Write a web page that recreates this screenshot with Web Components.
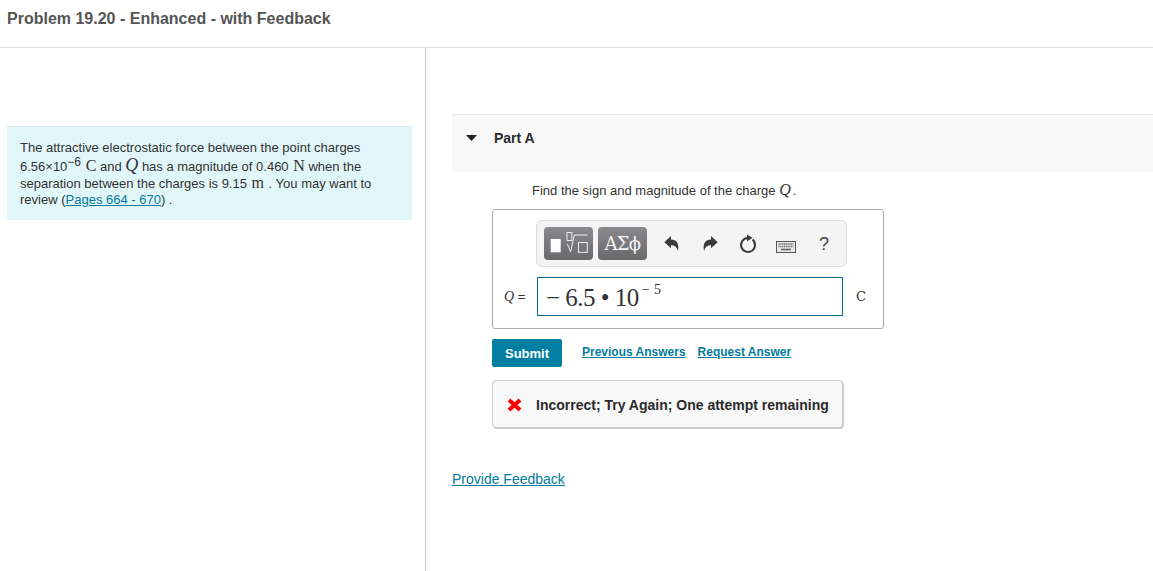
<!DOCTYPE html>
<html>
<head>
<meta charset="utf-8">
<title>Problem 19.20</title>
<style>
    html, body { margin: 0; padding: 0; height: 100%; background: #fff; overflow: hidden; }
    body { font-family: "Liberation Sans", Arial, sans-serif; color: #333; }
    problem-intro a { color: #007c9e; text-decoration: underline; }
    problem-intro sup { font-size: 12px; line-height: 0; vertical-align: 5px; }
    problem-intro .line2 { display: inline-block; margin: 3px 0 1px; }
</style>
</head>
<body>
<problem-page>
    <problem-intro slot="left">
        The attractive electrostatic force between the point charges<br>
        <span class="line2">6.56×10<sup>−6</sup> <m-i style="margin-left:1px">C</m-i> and <m-i italic>Q</m-i> has a magnitude of 0.460 <m-i style="margin-left:1px">N</m-i> when the</span><br>
        separation between the charges is 9.15 <m-i style="margin:0 1px">m</m-i> . You may want to<br>
        review (<a href="#">Pages 664 - 670</a>) .
    </problem-intro>
    <part-panel slot="right" title="Part A"></part-panel>
</problem-page>

<script>
// inline math letter, serif like the rendered equations
class MathLetter extends HTMLElement {
    constructor() {
        super()
        this.attachShadow({ mode: 'open' })
        this.shadowRoot.innerHTML = `
            <style>
                :host { display: inline; font-family: "Liberation Serif", serif; font-size: 16px; line-height: 0; }
                :host([italic]) { font-style: italic; font-size: 18px; }
            </style>
            <slot></slot>`
    }
}

class ProblemPage extends HTMLElement {
    constructor() {
        super()
        this.attachShadow({ mode: 'open' })
        this.shadowRoot.innerHTML = `
            <style>
                :host { display: flex; flex-direction: column; height: 571px; }
                header { height: 47px; border-bottom: 1px solid #ddd; padding-left: 7px; }
                h1 { margin: 0; padding-top: 10px; font: bold 16px/18px "Liberation Sans", Arial, sans-serif; color: #555; }
                .cols { display: flex; flex: 1; }
                .left { width: 405px; border-right: 1px solid #ccc; padding: 78px 13px 0 7px; }
                .right { flex: 1; padding: 66px 0 0 26px; min-width: 0; }
            </style>
            <header><h1>Problem 19.20 - Enhanced - with Feedback</h1></header>
            <div class="cols">
                <div class="left"><slot name="left"></slot></div>
                <div class="right"><slot name="right"></slot></div>
            </div>`
    }
}

class ProblemIntro extends HTMLElement {
    constructor() {
        super()
        this.attachShadow({ mode: 'open' })
        this.shadowRoot.innerHTML = `
            <style>
                :host {
                    display: block;
                    height: 93px;
                    background: #e1f6f9;
                    border-top: 1px solid #dfe7e8;
                }
                #text { padding: 13px 13px 0 13px; font-size: 13px; line-height: 16px; color: #333; }
            </style>
            <div id="text"><slot></slot></div>`
    }
}

class MathToolbar extends HTMLElement {
    constructor() {
        super()
        this.attachShadow({ mode: 'open' })
        this.shadowRoot.innerHTML = `
            <style>
                :host {
                    display: flex; align-items: center;
                    width: 311px; height: 47px; box-sizing: border-box;
                    background: #f4f4f4; border: 1px solid #ddd; border-radius: 6px;
                    padding: 0 0 0 7px;
                }
                .btn {
                    flex: none; width: 49px; height: 33px; border-radius: 4px;
                    background: linear-gradient(#8a898e, #69686b);
                    display: flex; align-items: center; justify-content: center;
                    color: #f4f4f4;
                }
                #templates { margin-right: 5px; }
                #symbols { margin-right: 6px; font: 18px "DejaVu Serif", "Liberation Serif", serif; letter-spacing: -0.7px; }
                .tool { flex: none; display: flex; width: 38px; justify-content: center; align-items: center; }
                svg { display: block; }
                #keys svg { margin-top: 6px; }
                #help { font: 18px "Liberation Sans", Arial, sans-serif; color: #444; padding-top: 1px; }
            </style>
            <div class="btn" id="templates">
                <svg width="49" height="33" viewBox="0 0 49 33">
                    <rect x="6.7" y="12" width="10" height="13.3" fill="#fff"/>
                    <rect x="23" y="5.5" width="4.8" height="8" fill="none" stroke="#e8e8e8"/>
                    <path d="M23.3 17 L26.7 24.7 L30.3 8 H43.5" fill="none" stroke="#eee"/>
                    <rect x="34.5" y="15.5" width="8.8" height="9.8" fill="none" stroke="#eee"/>
                </svg>
            </div>
            <div class="btn" id="symbols">ΑΣϕ</div>
            <div class="tool">
                <svg width="16" height="16" viewBox="0 0 16 16"><path d="M0.3 6.3 L7 0 V3.6 C12 3.6 15.5 7 14 15 C13 11 10.5 9 7 9 V12.3 Z" fill="#3a3a3a"/></svg>
            </div>
            <div class="tool">
                <svg width="16" height="16" viewBox="0 0 16 16"><path d="M15.7 6.3 L9 0 V3.6 C4 3.6 0.5 7 2 15 C3 11 5.5 9 9 9 V12.3 Z" fill="#3a3a3a"/></svg>
            </div>
            <div class="tool">
                <svg width="18" height="20" viewBox="0 0 18 20">
                    <path d="M8.5 4 A7 7 0 1 0 13.5 5.6" fill="none" stroke="#3a3a3a" stroke-width="2"/>
                    <path d="M8 0.5 L13.5 3.8 L8 7.5 Z" fill="#3a3a3a"/>
                </svg>
            </div>
            <div class="tool" id="keys">
                <svg width="20" height="12" viewBox="0 0 20 12">
                    <rect x="0.5" y="0.5" width="19" height="11" fill="#e8e8e8" stroke="#555"/>
                    <path d="M2.5 3 H17.5 M2.5 5.5 H17.5" stroke="#666" stroke-width="1.3" stroke-dasharray="1.2 0.6"/>
                    <path d="M5 8.5 H15" stroke="#666" stroke-width="1.6"/>
                </svg>
            </div>
            <div class="tool" id="help">?</div>`
    }
}

class AnswerBox extends HTMLElement {
    constructor() {
        super()
        this.attachShadow({ mode: 'open' })
        this.shadowRoot.innerHTML = `
            <style>
                :host {
                    display: block; width: 392px; height: 120px; box-sizing: border-box;
                    border: 1px solid #aaa; border-radius: 3px; padding: 10px 0 0 43px;
                }
                .row { display: flex; align-items: center; margin-top: 10px; margin-left: -32px; }
                .label { font-size: 13px; color: #333; white-space: nowrap; width: 33px; padding-top: 1px; }
                .label i { font: italic 14px "Liberation Serif", serif; }
                .field {
                    width: 306px; height: 39px; box-sizing: border-box;
                    border: 1px solid #006f8f; background: #fff;
                    font: 25px/39px "Liberation Serif", serif; letter-spacing: -0.5px;
                    color: #333; padding-left: 8px; white-space: nowrap;
                }
                .field sup { font-size: 14px; letter-spacing: 0.4px; line-height: 0; vertical-align: 12px; margin-left: 3px; }
                .unit { margin-left: 13px; font: 13px "DejaVu Serif", "Liberation Serif", serif; color: #333; }
            </style>
            <math-toolbar></math-toolbar>
            <div class="row">
                <div class="label"><i>Q</i> =</div>
                <div class="field">− 6.5 • 10<sup>− 5</sup></div>
                <div class="unit">C</div>
            </div>`
    }
}

class FeedbackBox extends HTMLElement {
    constructor() {
        super()
        this.attachShadow({ mode: 'open' })
        this.shadowRoot.innerHTML = `
            <style>
                :host {
                    display: flex; align-items: center;
                    width: 351px; height: 48px; box-sizing: border-box;
                    background: #f8f8f8; border: 1px solid #ccc; border-radius: 4px;
                    box-shadow: 1px 1px 0 #ccc; padding: 2px 0 0 14px;
                    font: bold 14px "Liberation Sans", Arial, sans-serif; color: #2b2b2b; white-space: nowrap;
                }
                svg { margin-right: 14px; }
            </style>
            <svg width="15" height="14" viewBox="0 0 15 14"><path d="M2 2 L13 12 M13 2 L2 12" stroke="#f00" stroke-width="4"/></svg>
            <slot>Incorrect; Try Again; One attempt remaining</slot>`
    }
}

class PartPanel extends HTMLElement {
    constructor() {
        super()
        this.attachShadow({ mode: 'open' })
        this.shadowRoot.innerHTML = `
            <style>
                :host { display: block; }
                .head {
                    background: #f8f8f8; border-top: 1px solid #e6e6e6;
                    display: flex; align-items: flex-start; padding: 14px 0 0 14px; height: 43px;
                    font: bold 14px/18px "Liberation Sans", Arial, sans-serif; color: #2b2b2b;
                }
                .head svg { margin: 6px 17px 0 0; }
                .body { padding: 9px 0 0 40px; }
                .q { font-size: 13px; line-height: 18px; color: #333; margin-left: 40px; }
                .q i { font: italic 16px "Liberation Serif", serif; margin-right: 2px; }
                answer-box { margin-top: 9px; }
                .actions { display: flex; align-items: center; margin-top: 10px; }
                .submit {
                    width: 70px; height: 28px; background: #007fa3; color: #fff; border-radius: 2px;
                    font: bold 13px/30px "Liberation Sans", Arial, sans-serif; text-align: center;
                }
                .actions a { color: #007c9e; font: bold 12px "Liberation Sans", Arial, sans-serif; text-decoration: underline; margin-bottom: 2px; }
                .actions a.first { margin-left: 20px; }
                .actions a + a { margin-left: 12px; }
                feedback-box { margin-top: 13px; }
                .provide { display: inline-block; margin: 43px 0 0 -40px; color: #007c9e; font-size: 14px; text-decoration: underline; }
            </style>
            <div class="head">
                <svg width="11" height="6" viewBox="0 0 11 6"><path d="M0 0 H11 L5.5 6 Z" fill="#222"/></svg>
                <span id="title"></span>
            </div>
            <div class="body">
                <div class="q">Find the sign and magnitude of the charge <i>Q</i>.</div>
                <answer-box></answer-box>
                <div class="actions">
                    <div class="submit">Submit</div>
                    <a class="first" href="#">Previous Answers</a>
                    <a href="#">Request Answer</a>
                </div>
                <feedback-box></feedback-box>
                <a class="provide" href="#">Provide Feedback</a>
            </div>`
    }
    connectedCallback() {
        this.shadowRoot.getElementById('title').textContent = this.getAttribute('title')
    }
}

customElements.define('m-i', MathLetter)
customElements.define('problem-page', ProblemPage)
customElements.define('problem-intro', ProblemIntro)
customElements.define('math-toolbar', MathToolbar)
customElements.define('answer-box', AnswerBox)
customElements.define('feedback-box', FeedbackBox)
customElements.define('part-panel', PartPanel)
</script>
</body>
</html>
